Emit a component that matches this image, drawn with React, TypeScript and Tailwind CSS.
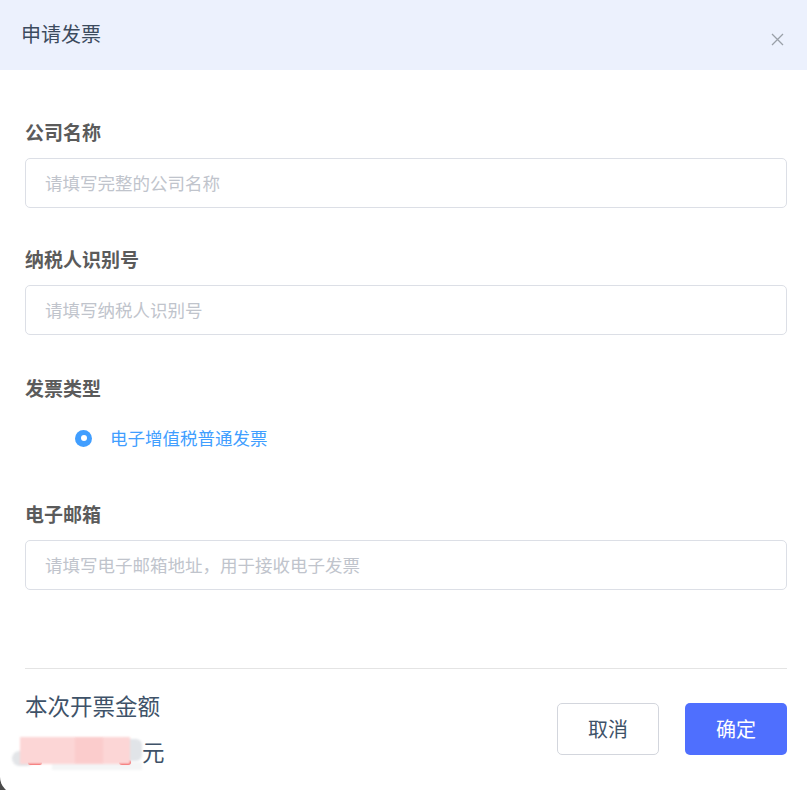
import React from "react";

const font = { fontFamily: '"Noto Sans CJK SC", "Noto Sans", sans-serif' };

function Label({ children }: { children: React.ReactNode }) {
  return (
    <div className="h-[26px] flex items-center pb-[3px] text-[19px] font-bold text-[#5b5b5b] leading-none">{children}</div>
  );
}

function Field({ label, placeholder }: { label: string; placeholder: string }) {
  return (
    <div className="flex flex-col">
      <Label>{label}</Label>
      <div className="mt-[12px] h-[50px] rounded-[5px] border border-[#dcdfe6] flex items-center px-[19px] text-[17.5px] text-[#c0c4cc]">
        {placeholder}
      </div>
    </div>
  );
}

export default function App() {
  return (
    <div style={font} className="w-[807px] h-[790px] overflow-hidden bg-[#4a4a4a]">
      <div className="w-[830px] h-[794px] bg-white rounded-bl-[17px] flex flex-col">
        <div className="h-[70px] bg-[#ecf1fd] flex items-center justify-between pl-[21px] pr-[23px] w-[807px]">
          <div className="text-[20px] text-[#3c4b5e] leading-none -mt-[2px]">申请发票</div>
          <svg width="13" height="13" viewBox="0 0 13 13" className="mt-[9px]">
            <path d="M1 1 L12 12 M12 1 L1 12" stroke="#9aa0a8" strokeWidth="1.3" />
          </svg>
        </div>
        <div className="w-[807px] pl-[25px] pr-[20px] pt-[50px] flex flex-col">
          <Field label="公司名称" placeholder="请填写完整的公司名称" />
          <div className="h-[39px]" />
          <Field label="纳税人识别号" placeholder="请填写纳税人识别号" />
          <div className="h-[41px]" />
          <Label>发票类型</Label>
          <div className="mt-[23px] h-[26px] flex items-center pl-[50px]">
            <div className="w-[17px] h-[17px] rounded-full bg-[#409eff] flex items-center justify-center">
              <div className="w-[6px] h-[6px] rounded-full bg-white" />
            </div>
            <div className="ml-[18px] text-[17.5px] text-[#409eff]">电子增值税普通发票</div>
          </div>
          <div className="h-[51px]" />
          <Field label="电子邮箱" placeholder="请填写电子邮箱地址，用于接收电子发票" />
          <div className="h-[79px] border-b border-[#e4e4e4]" />
          <div className="flex justify-between items-start pt-[22px]">
            <div className="flex flex-col">
              <div className="text-[22.5px] text-[#3e5268] leading-none h-[28px] flex items-center">本次开票金额</div>
              <div className="relative mt-[18px] h-[30px] w-[150px]">
                <div className="absolute left-[-13px] top-[14px] w-[22px] h-[15px] rounded-full bg-[#e3e5e8] blur-[1px]" />
                <div className="absolute left-[27px] top-[25px] w-[90px] h-[8px] bg-[#f4f5f6] blur-[1px]" />
                <div className="absolute left-[3px] top-[23px] w-[14px] h-[5px] rounded-full bg-[#f25c5c] blur-[0.5px]" />
                <div className="absolute left-[94px] top-[22px] w-[12px] h-[6px] rounded-full bg-[#f25c5c] blur-[0.5px]" />
                <div className="absolute left-[93px] top-[2px] w-[24px] h-[22px] rounded-[6px] bg-[#e1e4e8] blur-[1px]" />
                <div className="absolute left-[-5px] top-[0px] w-[110px] h-[27px] bg-[#fcd6d6] blur-[1px]" />
                <div className="absolute left-[50px] top-[1px] w-[28px] h-[25px] bg-[#fbcccc] blur-[1px]" />
                <div className="absolute left-[117px] top-[3px] text-[22.5px] text-[#3e5268] leading-none">元</div>
              </div>
            </div>
            <div className="flex gap-[26px] mt-[12px]">
              <div className="w-[102px] h-[52px] rounded-[5px] border border-[#d3d6dd] flex items-center justify-center text-[20px] text-[#3e5268]">取消</div>
              <div className="w-[102px] h-[52px] rounded-[5px] bg-[#4f6ffe] flex items-center justify-center text-[20px] text-white">确定</div>
            </div>
          </div>
        </div>
      </div>
    </div>
  );
}
